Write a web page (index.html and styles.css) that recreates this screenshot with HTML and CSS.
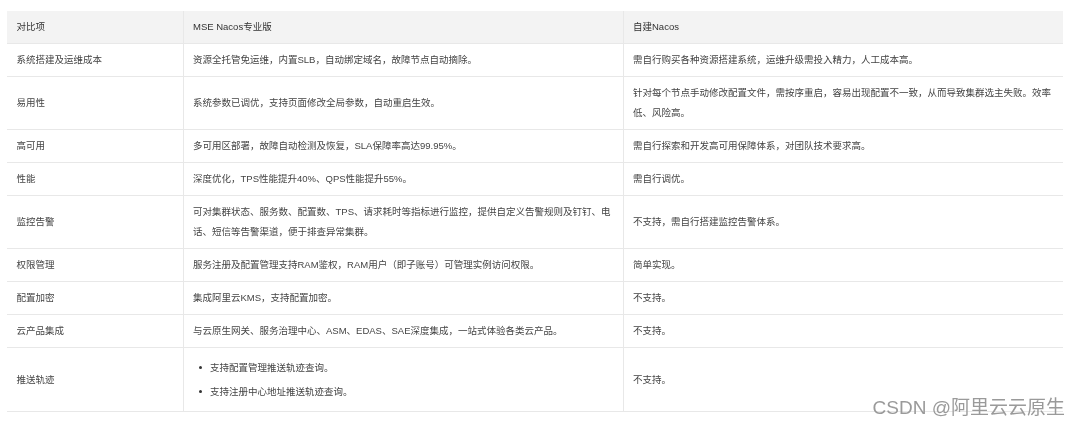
FILE: index.html
```html
<!DOCTYPE html>
<html lang="zh-CN">
<head>
<meta charset="utf-8">
<title>对比项</title>
<link rel="stylesheet" href="styles.css">
</head>
<body>
<main class="page">
<table class="compare">
<colgroup><col class="col-a"><col class="col-b"><col class="col-c"></colgroup>
<thead>
<tr class="r32"><th>对比项</th><th>MSE Nacos专业版</th><th>自建Nacos</th></tr>
</thead>
<tbody>
<tr class="r33"><td>系统搭建及运维成本</td><td>资源全托管免运维，内置SLB，自动绑定域名，故障节点自动摘除。</td><td>需自行购买各种资源搭建系统，运维升级需投入精力，人工成本高。</td></tr>
<tr><td>易用性</td><td>系统参数已调优，支持页面修改全局参数，自动重启生效。</td><td>针对每个节点手动修改配置文件，需按序重启，容易出现配置不一致，从而导致集群选主失败。效率低、风险高。</td></tr>
<tr class="r33"><td>高可用</td><td>多可用区部署，故障自动检测及恢复，SLA保障率高达99.95%。</td><td>需自行探索和开发高可用保障体系，对团队技术要求高。</td></tr>
<tr class="r33"><td>性能</td><td>深度优化，TPS性能提升40%、QPS性能提升55%。</td><td>需自行调优。</td></tr>
<tr><td>监控告警</td><td>可对集群状态、服务数、配置数、TPS、请求耗时等指标进行监控，提供自定义告警规则及钉钉、电话、短信等告警渠道，便于排查异常集群。</td><td>不支持，需自行搭建监控告警体系。</td></tr>
<tr class="r33"><td>权限管理</td><td>服务注册及配置管理支持RAM鉴权，RAM用户（即子账号）可管理实例访问权限。</td><td>简单实现。</td></tr>
<tr class="r33"><td>配置加密</td><td>集成阿里云KMS，支持配置加密。</td><td>不支持。</td></tr>
<tr class="r33"><td>云产品集成</td><td>与云原生网关、服务治理中心、ASM、EDAS、SAE深度集成，一站式体验各类云产品。</td><td>不支持。</td></tr>
<tr><td>推送轨迹</td><td><ul class="points"><li>支持配置管理推送轨迹查询。</li><li>支持注册中心地址推送轨迹查询。</li></ul></td><td>不支持。</td></tr>
</tbody>
</table>
<div class="mark">CSDN @阿里云云原生</div>
</main>
</body>
</html>
```
FILE: styles.css
```css
* { box-sizing: border-box; }
html, body { margin: 0; background: #fff; }
.page { position: relative; width: 1080px; height: 426px; overflow: hidden; padding: 11px 17px 0 7px; }
.compare {
  width: 1056px;
  table-layout: fixed;
  border-collapse: collapse;
  font-family: "Liberation Sans", "Noto Sans CJK SC", sans-serif;
  font-size: 9.5px;
  line-height: 20px;
  color: #444;
  filter: blur(0.4px);
}
.col-a { width: 176px; }
.col-b { width: 440px; }
.col-c { width: 440px; }
th, td {
  padding: 6px 9.5px;
  text-align: left;
  font-weight: 400;
  vertical-align: middle;
  border-bottom: 1px solid #e8e8e8;
  border-right: 1px solid #e8e8e8;
}
th:last-child, td:last-child { border-right: 0; }
th { background: #f3f3f3; color: #333; }
.r32 { height: 32px; }
.r33 { height: 33px; }
.points { margin: 0; padding: 6px 0 5px 17px; list-style: none; }
.points li { position: relative; margin: 0; line-height: 16px; padding: 0; }
.points li + li { margin-top: 8px; }
.points li::before {
  content: "";
  position: absolute;
  left: -11px;
  top: 6px;
  width: 3px;
  height: 3px;
  border-radius: 50%;
  background: #333;
}
.mark {
  position: absolute;
  right: 15px;
  bottom: 7px;
  font-family: "Liberation Sans", "Noto Sans CJK SC", sans-serif;
  font-size: 19px;
  line-height: 22px;
  color: #9a9a9a;
  white-space: nowrap;
  filter: blur(0.4px);
}
```
